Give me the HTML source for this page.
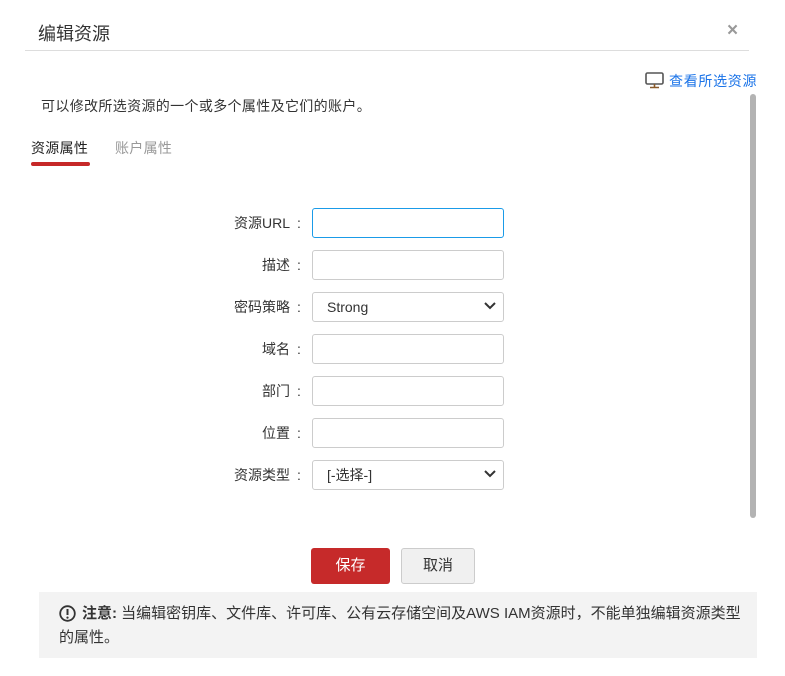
<!DOCTYPE html>
<html><head><meta charset="utf-8"><style>
body{margin:0;width:785px;height:676px;background:#fff;font-family:"Liberation Sans","Noto Sans CJK SC",sans-serif;color:#333;position:relative;overflow:hidden}
.a{position:absolute;white-space:nowrap}
.lbl{position:absolute;width:120px;left:170px;text-align:right;font-size:14px;color:#333;line-height:30px}
.col{position:absolute;left:297px;font-size:14px;line-height:30px}
.in{position:absolute;left:312px;width:190px;height:28px;border:1px solid #ccc;border-radius:3px;background:#fff;font-size:14px;line-height:28px}
.in span{position:absolute;left:14px}
.in svg{position:absolute;right:7px;top:9px}
</style></head><body>
<div class="a" style="left:38px;top:20px;font-size:18px;color:#333">编辑资源</div>
<div class="a" style="left:727px;top:20px;font-size:19px;color:#999;font-weight:bold">×</div>
<div class="a" style="left:25px;top:50px;width:724px;height:1px;background:#ddd"></div>
<svg class="a" style="left:645px;top:72px" width="19" height="17" viewBox="0 0 19 17"><rect x="1" y="1" width="17" height="11" rx="1.5" fill="none" stroke="#555" stroke-width="1.6"/><path d="M9.5 12v3M5 15.5h9" stroke="#8a5a2a" stroke-width="1.6"/></svg>
<div class="a" style="left:669px;top:71px;font-size:14px;color:#1a73e8;letter-spacing:0.7px">查看所选资源</div>
<div class="a" style="left:750px;top:94px;width:6px;height:424px;background:#b3b3b3;border-radius:3px"></div>
<div class="a" style="left:41px;top:96px;font-size:14px;letter-spacing:0.35px">可以修改所选资源的一个或多个属性及它们的账户。</div>
<div class="a" style="left:31px;top:138px;font-size:14px;color:#222;letter-spacing:0.3px">资源属性</div>
<div class="a" style="left:115px;top:138px;font-size:14px;color:#999;letter-spacing:0.3px">账户属性</div>
<div class="a" style="left:31px;top:162px;width:59px;height:4px;background:#c62828;border-radius:2px"></div>

<div class="lbl" style="top:208px">资源URL</div><div class="col" style="top:208px">:</div>
<div class="in" style="top:208px;border-color:#1a9be8"></div>
<div class="lbl" style="top:250px">描述</div><div class="col" style="top:250px">:</div>
<div class="in" style="top:250px"></div>
<div class="lbl" style="top:292px">密码策略</div><div class="col" style="top:292px">:</div>
<div class="in" style="top:292px"><span>Strong</span><svg width="12" height="8" viewBox="0 0 12 8"><path d="M1 1l5 5 5-5" fill="none" stroke="#333" stroke-width="2"/></svg></div>
<div class="lbl" style="top:334px">域名</div><div class="col" style="top:334px">:</div>
<div class="in" style="top:334px"></div>
<div class="lbl" style="top:376px">部门</div><div class="col" style="top:376px">:</div>
<div class="in" style="top:376px"></div>
<div class="lbl" style="top:418px">位置</div><div class="col" style="top:418px">:</div>
<div class="in" style="top:418px"></div>
<div class="lbl" style="top:460px">资源类型</div><div class="col" style="top:460px">:</div>
<div class="in" style="top:460px"><span>[-选择-]</span><svg width="12" height="8" viewBox="0 0 12 8"><path d="M1 1l5 5 5-5" fill="none" stroke="#333" stroke-width="2"/></svg></div>

<div class="a" style="left:311px;top:548px;width:79px;height:36px;background:#c62a2a;border-radius:3px;color:#fff;font-size:15px;line-height:36px;text-align:center">保存</div>
<div class="a" style="left:401px;top:548px;width:72px;height:34px;background:#f0f0f0;border:1px solid #ccc;border-radius:3px;color:#333;font-size:15px;line-height:34px;text-align:center">取消</div>

<div class="a" style="left:39px;top:592px;width:718px;height:66px;background:#f3f3f3"></div>
<svg class="a" style="left:59px;top:605px" width="17" height="17" viewBox="0 0 17 17"><circle cx="8.5" cy="8.5" r="7.3" fill="none" stroke="#333" stroke-width="1.8"/><path d="M8.5 4v6" stroke="#333" stroke-width="2"/><circle cx="8.5" cy="12.6" r="1.1" fill="#333"/></svg>
<div class="a" style="left:82px;top:602px;font-size:15px;color:#333"><b>注意:</b> 当编辑密钥库、文件库、许可库、公有云存储空间及AWS IAM资源时，不能单独编辑资源类型</div>
<div class="a" style="left:59px;top:626px;font-size:15px;color:#333">的属性。</div>
</body></html>
